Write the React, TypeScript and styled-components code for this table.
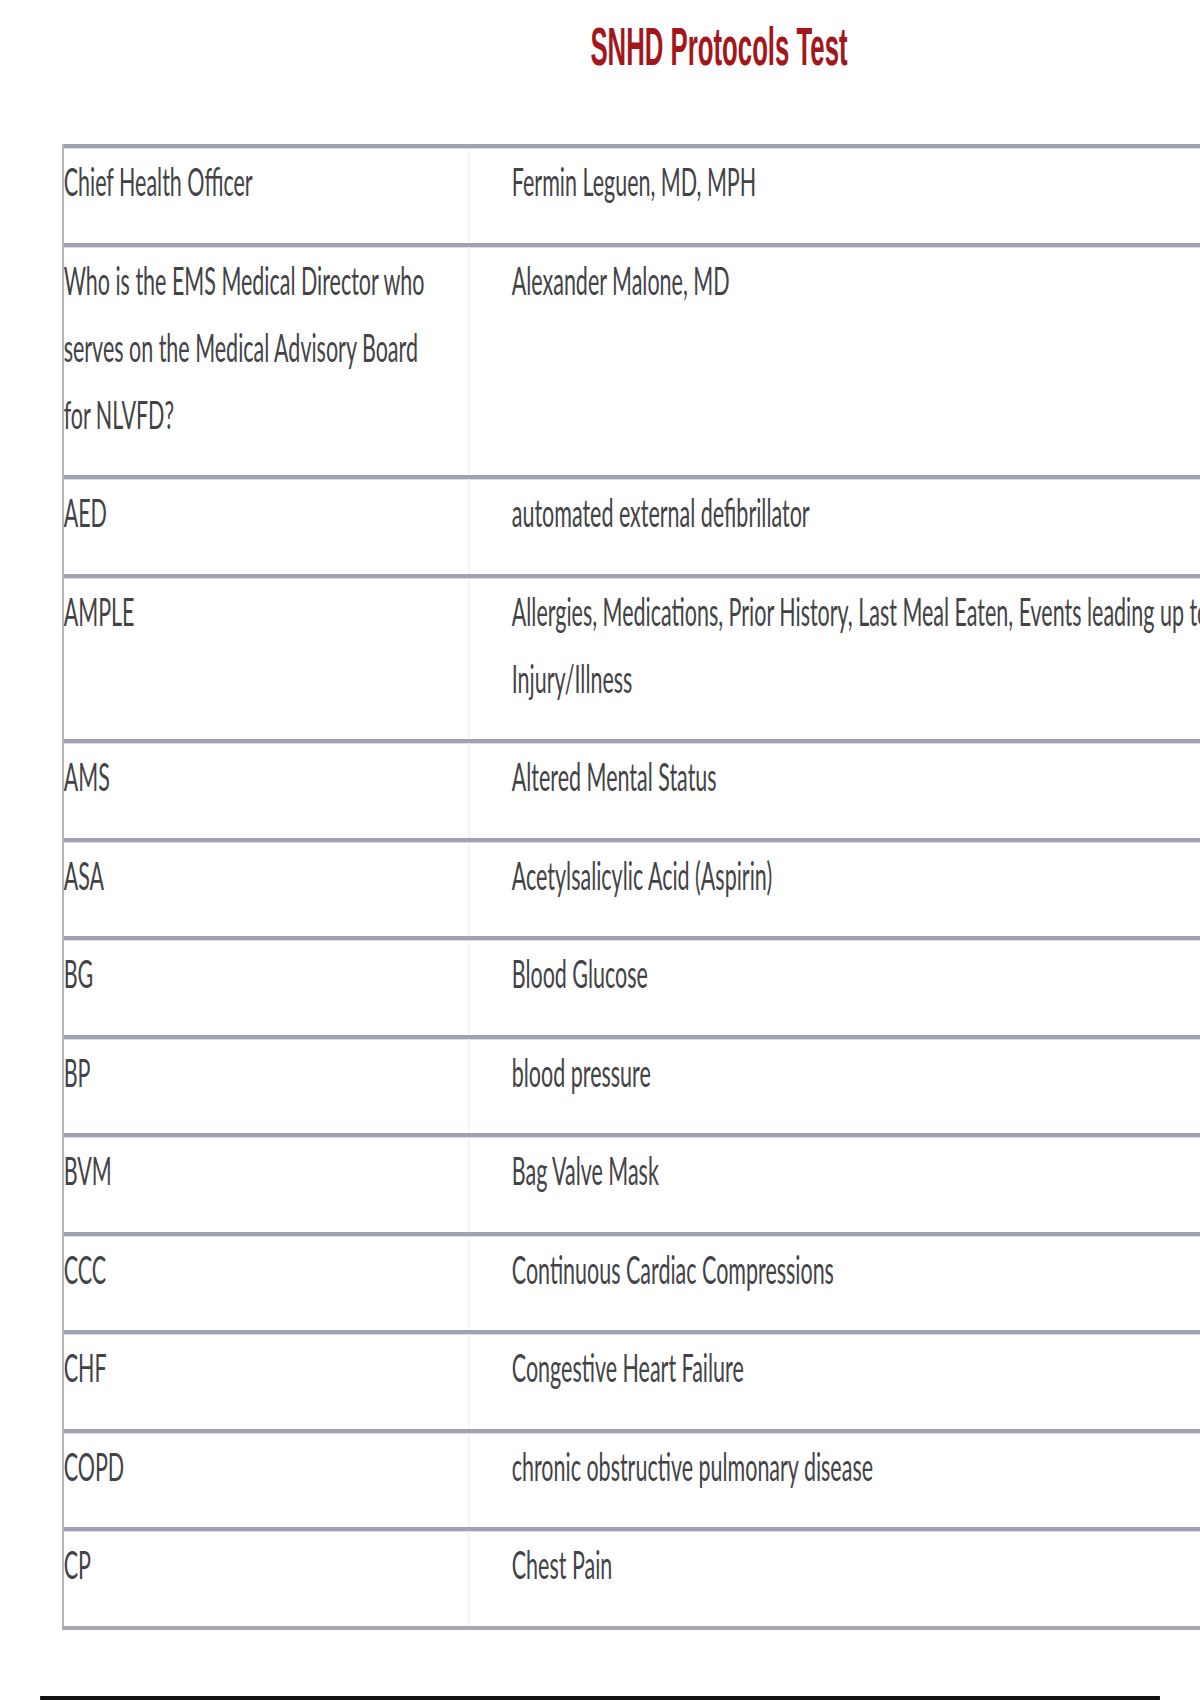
import React from "react";
import styled, { createGlobalStyle } from "styled-components";

// the screenshot is squeezed sideways; lay out at natural width and squeeze the stage
const SQUEEZE = 0.565;
const u = (px: number) => `${(px / SQUEEZE).toFixed(1)}px`;

const GlobalStyle = createGlobalStyle`
  html, body {
    margin: 0;
    padding: 0;
    background: #fff;
    overflow: hidden;
  }
`;

const Stage = styled.div`
  width: ${u(1200)};
  height: 1700px;
  transform: scaleX(${SQUEEZE});
  transform-origin: 0 0;
  font-family: Lato, "Open Sans", sans-serif;
  color: #434346;
`;

const Content = styled.div`
  width: ${u(1376 - 62)};
  margin-left: ${u(62)};
`;

const Title = styled.h1`
  margin: 20px 0 71px;
  font-family: "Liberation Sans", Arial, sans-serif;
  font-size: 53px;
  line-height: 53px;
  font-weight: 700;
  text-align: center;
  color: #a3161c;

  span {
    display: inline-block;
    transform: scaleX(0.86);
  }
`;

const Table = styled.div`
  width: ${u(1300 - 62)};
  display: flex;
  flex-direction: column;
  border-left: 3px solid #a9a9ad;
  border-bottom: 4px solid #a4a6b4;
`;

const Row = styled.div`
  display: grid;
  grid-template-columns: ${u(467 - 62)} 1fr;
  border-top: 4px solid #a0a2b2;
  box-shadow: inset 0 1px 0 #d9dae2;
`;

const Cell = styled.div<{ $answer?: boolean }>`
  font-size: 38px;
  line-height: 67px;
  padding: 0 ${u(42)} 27.5px ${(p) => (p.$answer ? u(42) : "0")};
  border-left: ${(p) => (p.$answer ? "2px solid #ececef" : "none")};
`;

const Rule = styled.hr`
  margin: 66px 0 0 ${u(40)};
  width: ${u(1160 - 40)};
  height: 6px;
  border: none;
  background: #111;
`;

const cards: [string, string][] = [
  ["Chief Health Officer", "Fermin Leguen, MD, MPH"],
  [
    "Who is the EMS Medical Director who serves on the Medical Advisory Board for NLVFD?",
    "Alexander Malone, MD",
  ],
  ["AED", "automated external defibrillator"],
  [
    "AMPLE",
    "Allergies, Medications, Prior History, Last Meal Eaten, Events leading up to Injury/Illness",
  ],
  ["AMS", "Altered Mental Status"],
  ["ASA", "Acetylsalicylic Acid (Aspirin)"],
  ["BG", "Blood Glucose"],
  ["BP", "blood pressure"],
  ["BVM", "Bag Valve Mask"],
  ["CCC", "Continuous Cardiac Compressions"],
  ["CHF", "Congestive Heart Failure"],
  ["COPD", "chronic obstructive pulmonary disease"],
  ["CP", "Chest Pain"],
];

export default function App() {
  return (
    <>
      <GlobalStyle />
      <Stage>
        <Content>
          <Title>
            <span>SNHD Protocols Test</span>
          </Title>
          <Table>
            {cards.map(([term, definition]) => (
              <Row key={term}>
                <Cell>{term}</Cell>
                <Cell $answer>{definition}</Cell>
              </Row>
            ))}
          </Table>
        </Content>
        <Rule />
      </Stage>
    </>
  );
}
